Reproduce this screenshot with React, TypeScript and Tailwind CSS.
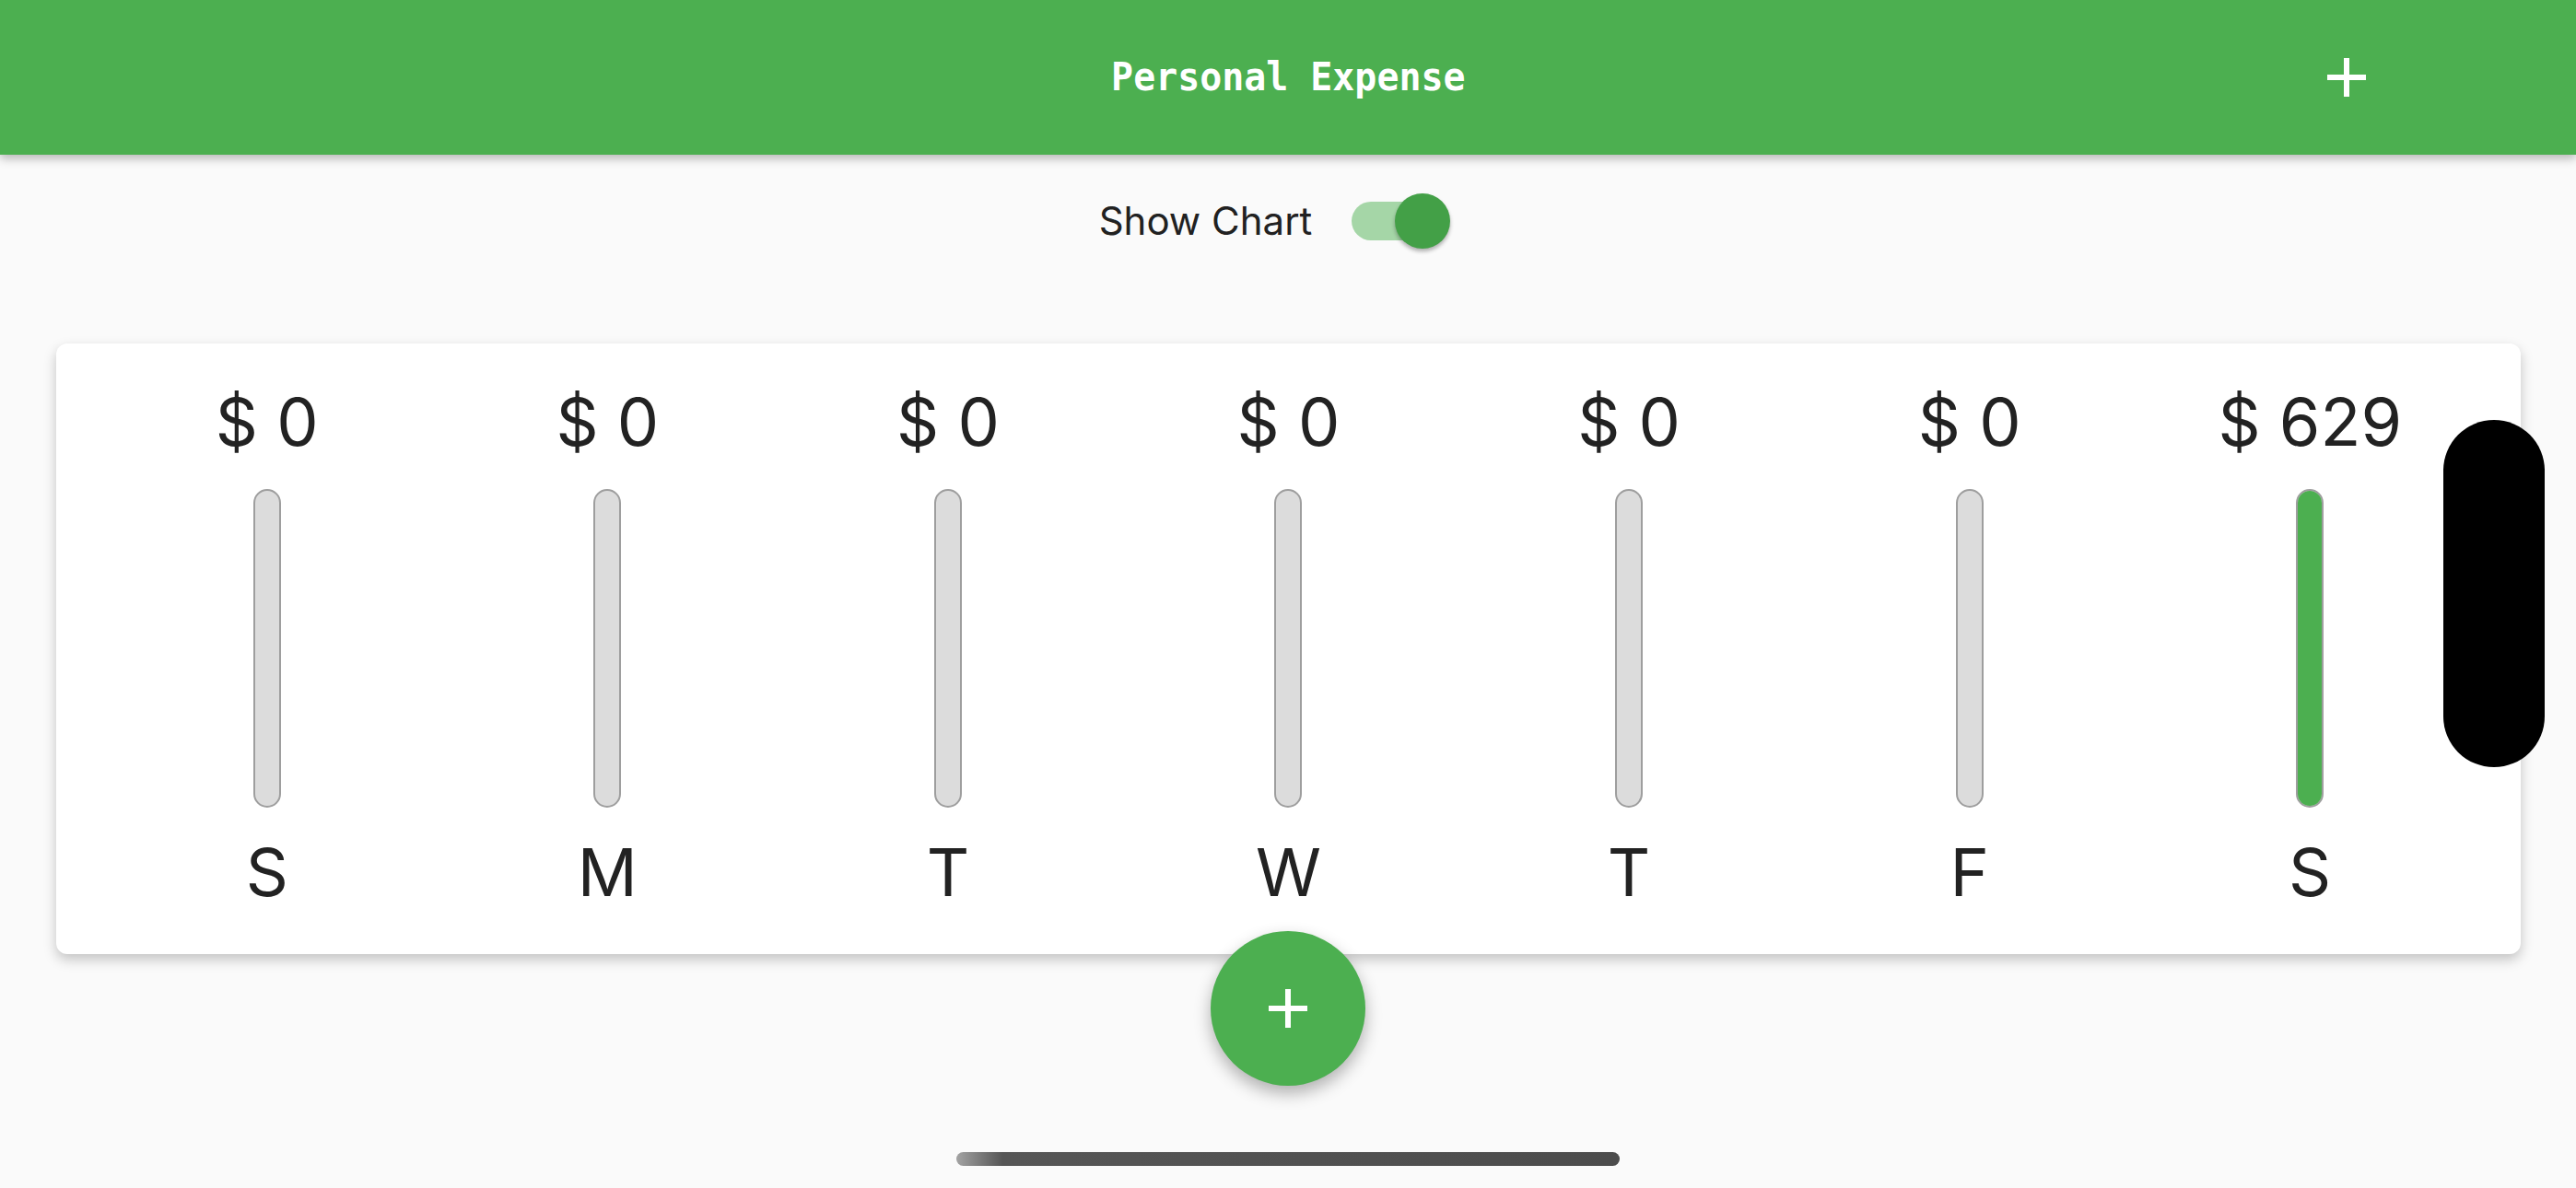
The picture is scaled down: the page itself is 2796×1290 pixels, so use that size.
import React from "react";

const AddIcon = ({ className }: { className?: string }) => (
  <svg viewBox="0 0 24 24" className={className} fill="currentColor">
    <path d="M19 13h-6v6h-2v-6H5v-2h6V5h2v6h6v2z" />
  </svg>
);

const days = [
  { label: "S", amount: "$ 0", fill: 0 },
  { label: "M", amount: "$ 0", fill: 0 },
  { label: "T", amount: "$ 0", fill: 0 },
  { label: "W", amount: "$ 0", fill: 0 },
  { label: "T", amount: "$ 0", fill: 0 },
  { label: "F", amount: "$ 0", fill: 0 },
  { label: "S", amount: "$ 629", fill: 1 },
];

export default function App() {
  return (
    <div
      className="relative w-[2796px] h-[1290px] overflow-hidden bg-[#fafafa] flex flex-col"
      style={{ fontFamily: "Inter, 'Noto Sans', sans-serif" }}
    >
      {/* App bar */}
      <header className="relative z-10 h-[168px] shrink-0 bg-[#4caf50] grid grid-cols-[1fr_auto_1fr] items-center shadow-[0_4px_10px_rgba(0,0,0,0.28)]">
        <div />
        <h1
          className="text-white font-bold text-[42px] leading-none scale-x-[0.95]"
          style={{ fontFamily: "'DejaVu Sans Mono', 'Liberation Mono', monospace" }}
        >
          Personal Expense
        </h1>
        <div className="flex justify-end pr-[213px]">
          <button className="w-[72px] h-[72px] flex items-center justify-center text-white">
            <AddIcon className="w-[72px] h-[72px]" />
          </button>
        </div>
      </header>

      {/* Show chart toggle */}
      <div className="mt-[42px] h-[60px] flex items-center justify-center pr-[29px]">
        <span className="text-[42px] leading-none text-[#212121]">Show Chart</span>
        <div className="relative ml-[43px] w-[107px] h-[60px] flex items-center">
          <div className="w-[98px] h-[42px] rounded-full bg-[#a5d6a7]" />
          <div className="absolute right-0 top-0 w-[60px] h-[60px] rounded-full bg-[#43a047] shadow-[0_3px_4px_rgba(0,0,0,0.3)]" />
        </div>
      </div>

      {/* Chart card */}
      <div className="mt-[103px] ml-[61px] mr-[60px] rounded-[12px] bg-white shadow-[0_6px_14px_rgba(0,0,0,0.22)] pt-[43px] pb-[47px] px-[44px] grid grid-cols-7">
        {days.map((d, i) => (
          <div key={i} className="flex flex-col items-center">
            <div className="h-[84px] text-[72px] leading-[84px] text-[#222] whitespace-nowrap">
              {d.amount}
            </div>
            <div className="mt-[31px] h-[346px] w-[30px] relative rounded-full border-2 border-[#9e9e9e] bg-[#dcdcdc] overflow-hidden">
              {d.fill > 0 && (
                <div className="absolute inset-[-2px] rounded-full bg-[#4caf50]" />
              )}
            </div>
            <div className="mt-[28px] h-[84px] text-[72px] leading-[84px] text-[#222]">
              {d.label}
            </div>
          </div>
        ))}
      </div>

      {/* Floating action button */}
      <button className="absolute left-[1314px] top-[1011px] w-[168px] h-[168px] rounded-full bg-[#4caf50] text-white flex items-center justify-center shadow-[0_8px_18px_rgba(0,0,0,0.3)]">
        <AddIcon className="w-[72px] h-[72px]" />
      </button>

      {/* Dynamic island (landscape) */}
      <div className="absolute left-[2652px] top-[456px] w-[110px] h-[377px] rounded-full bg-black" />

      {/* Home indicator */}
      <div className="absolute left-[1038px] top-[1251px] w-[720px] h-[15px] rounded-full bg-linear-to-r from-[#a3a3a3] from-0% via-[#565656] via-[7%] to-[#4c4c4c]" />
    </div>
  );
}
